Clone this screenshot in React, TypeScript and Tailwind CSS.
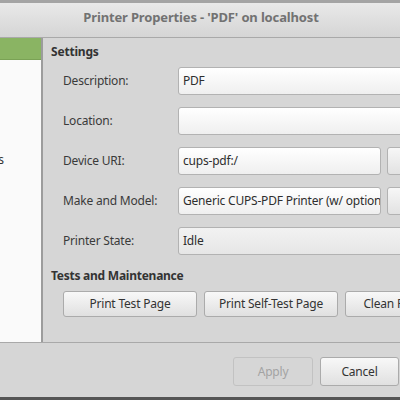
import React from "react";

const font = { fontFamily: '"Noto Sans", "DejaVu Sans", sans-serif' };

function Field({ label, value, button, idle }: { label: string; value: string; button?: boolean; idle?: boolean }) {
  return (
    <div className="flex items-center h-[28px]">
      <div className="w-[115px] shrink-0 text-[12px] tracking-[-0.2px] text-[#3a3a3a]">{label}</div>
      <div className="flex flex-1 gap-[6px] min-w-0">
        <div
          className={`h-[28px] flex items-center px-[4px] rounded-[3px] border border-[#b2b2b2] text-[12px] tracking-[-0.2px] text-[#2e2e2e] whitespace-nowrap overflow-hidden ${
            button ? "w-[203px] shrink-0" : "w-[240px] shrink-0"
          } ${idle ? "bg-gradient-to-b from-[#f2f2f2] to-[#e6e6e6]" : "bg-gradient-to-b from-[#ffffff] to-[#efefef]"}`}
        >
          {value}
        </div>
        {button && (
          <div className="w-[40px] shrink-0 h-[28px] rounded-[3px] border border-[#b2b2b2] bg-gradient-to-b from-[#f7f7f7] to-[#e2e2e2]" />
        )}
      </div>
    </div>
  );
}

function Btn({ children, w, disabled }: { children: React.ReactNode; w: string; disabled?: boolean }) {
  return (
    <div
      className={`${w} shrink-0 flex items-center justify-center rounded-[3px] border text-[12px] tracking-[-0.2px] whitespace-nowrap overflow-hidden ${
        disabled
          ? "border-[#c2c2c2] bg-[#d6d6d6] text-[#a3a3a3]"
          : "border-[#ababab] bg-gradient-to-b from-[#f8f8f8] to-[#e0e0e0] text-[#333333]"
      }`}
    >
      {children}
    </div>
  );
}

export default function App() {
  return (
    <div className="w-[400px] h-[400px] overflow-hidden bg-[#d6d6d6] flex flex-col" style={font}>
      {/* title bar */}
      <div className="h-[3px] bg-[#a4a4a4] shrink-0" />
      <div className="h-[35px] shrink-0 bg-gradient-to-b from-[#e9e9e9] to-[#d5d5d5] flex items-start pt-[5px] justify-center border-b border-[#a9a9a9]">
        <span className="text-[13px] tracking-[-0.15px] font-bold text-[#727272] ml-[2px]">Printer Properties - 'PDF' on localhost</span>
      </div>
      {/* main */}
      <div className="h-[305px] shrink-0 flex border-b border-[#a9a9a9]">
        <div className="w-[43px] shrink-0 flex flex-col bg-[#fafafa] border-r-2 border-[#9c9c9c]">
          <div className="h-[22px] shrink-0 bg-[#8ab463] border-b border-[#7aa255]" />
          <div className="flex flex-col">
            <div className="h-[90px]" />
            <div className="flex justify-end overflow-hidden pr-[37px] h-[20px] items-center">
              <span className="text-[12px] text-[#333333] whitespace-nowrap">Printer Options</span>
            </div>
          </div>
        </div>
        <div className="flex-1 flex flex-col pl-[8px] pt-[5px] overflow-hidden">
          <div className="text-[12px] tracking-[-0.2px] font-bold text-[#333333] h-[18px] leading-[18px]">Settings</div>
          <div className="flex flex-col gap-[12px] pl-[12px] mt-[6px]">
            <Field label="Description:" value="PDF" />
            <Field label="Location:" value="" />
            <Field label="Device URI:" value="cups-pdf:/" button />
            <Field label="Make and Model:" value="Generic CUPS-PDF Printer (w/ options)" button />
            <Field label="Printer State:" value="Idle" idle />
          </div>
          <div className="text-[12px] tracking-[-0.25px] font-bold text-[#333333] h-[18px] leading-[18px] mt-[12px]">Tests and Maintenance</div>
          <div className="flex gap-[7px] pl-[12px] mt-[6px] h-[26px]">
            <Btn w="w-[134px]">Print Test Page</Btn>
            <Btn w="w-[134px]">Print Self-Test Page</Btn>
            <Btn w="w-[134px]">Clean Print Heads</Btn>
          </div>
        </div>
      </div>
      {/* bottom */}
      <div className="flex-1 flex items-start justify-end pt-[14px] pr-[1px]">
        <div className="flex h-[29px] gap-[7px]">
          <Btn w="w-[80px]" disabled>Apply</Btn>
          <Btn w="w-[79px]">Cancel</Btn>
        </div>
      </div>
      <div className="h-[3px] bg-[#555555] shrink-0" />
    </div>
  );
}
